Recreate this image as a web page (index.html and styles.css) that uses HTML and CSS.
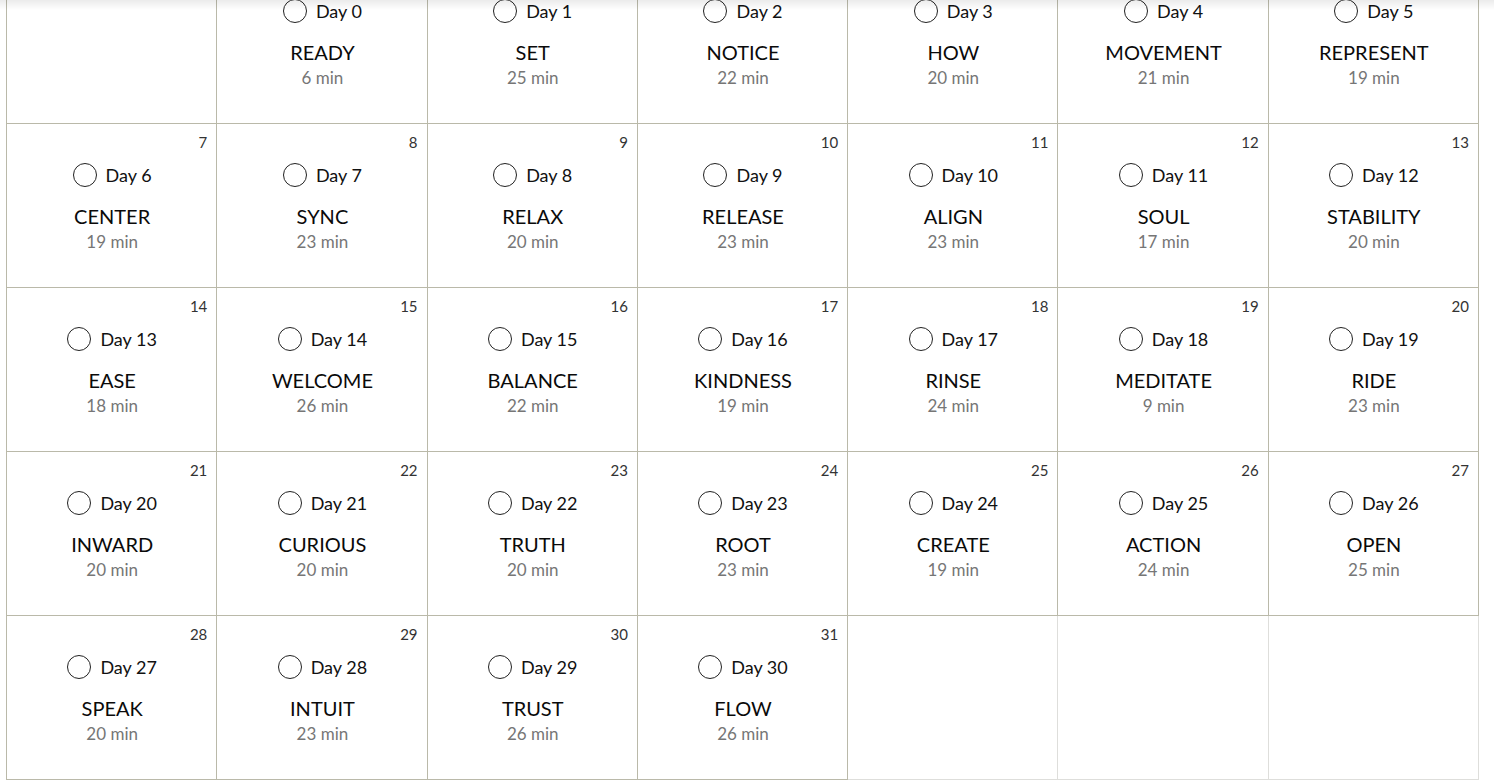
FILE: index.html
```html
<!DOCTYPE html>
<html lang="en">
<head>
<meta charset="utf-8">
<title>Calendar</title>
<link rel="stylesheet" href="styles.css">
</head>
<body>
<div class="top-shadow"></div>
<main class="calendar">
  <div class="cell empty-lead"></div>
  <div class="cell"><div class="date"></div><div class="day"><span class="check"></span><span class="day-label">Day 0</span></div><div class="title">READY</div><div class="mins">6 min</div></div>
  <div class="cell"><div class="date"></div><div class="day"><span class="check"></span><span class="day-label">Day 1</span></div><div class="title">SET</div><div class="mins">25 min</div></div>
  <div class="cell"><div class="date"></div><div class="day"><span class="check"></span><span class="day-label">Day 2</span></div><div class="title">NOTICE</div><div class="mins">22 min</div></div>
  <div class="cell"><div class="date"></div><div class="day"><span class="check"></span><span class="day-label">Day 3</span></div><div class="title">HOW</div><div class="mins">20 min</div></div>
  <div class="cell"><div class="date"></div><div class="day"><span class="check"></span><span class="day-label">Day 4</span></div><div class="title">MOVEMENT</div><div class="mins">21 min</div></div>
  <div class="cell"><div class="date"></div><div class="day"><span class="check"></span><span class="day-label">Day 5</span></div><div class="title">REPRESENT</div><div class="mins">19 min</div></div>

  <div class="cell"><div class="date">7</div><div class="day"><span class="check"></span><span class="day-label">Day 6</span></div><div class="title">CENTER</div><div class="mins">19 min</div></div>
  <div class="cell"><div class="date">8</div><div class="day"><span class="check"></span><span class="day-label">Day 7</span></div><div class="title">SYNC</div><div class="mins">23 min</div></div>
  <div class="cell"><div class="date">9</div><div class="day"><span class="check"></span><span class="day-label">Day 8</span></div><div class="title">RELAX</div><div class="mins">20 min</div></div>
  <div class="cell"><div class="date">10</div><div class="day"><span class="check"></span><span class="day-label">Day 9</span></div><div class="title">RELEASE</div><div class="mins">23 min</div></div>
  <div class="cell"><div class="date">11</div><div class="day"><span class="check"></span><span class="day-label">Day 10</span></div><div class="title">ALIGN</div><div class="mins">23 min</div></div>
  <div class="cell"><div class="date">12</div><div class="day"><span class="check"></span><span class="day-label">Day 11</span></div><div class="title">SOUL</div><div class="mins">17 min</div></div>
  <div class="cell"><div class="date">13</div><div class="day"><span class="check"></span><span class="day-label">Day 12</span></div><div class="title">STABILITY</div><div class="mins">20 min</div></div>

  <div class="cell"><div class="date">14</div><div class="day"><span class="check"></span><span class="day-label">Day 13</span></div><div class="title">EASE</div><div class="mins">18 min</div></div>
  <div class="cell"><div class="date">15</div><div class="day"><span class="check"></span><span class="day-label">Day 14</span></div><div class="title">WELCOME</div><div class="mins">26 min</div></div>
  <div class="cell"><div class="date">16</div><div class="day"><span class="check"></span><span class="day-label">Day 15</span></div><div class="title">BALANCE</div><div class="mins">22 min</div></div>
  <div class="cell"><div class="date">17</div><div class="day"><span class="check"></span><span class="day-label">Day 16</span></div><div class="title">KINDNESS</div><div class="mins">19 min</div></div>
  <div class="cell"><div class="date">18</div><div class="day"><span class="check"></span><span class="day-label">Day 17</span></div><div class="title">RINSE</div><div class="mins">24 min</div></div>
  <div class="cell"><div class="date">19</div><div class="day"><span class="check"></span><span class="day-label">Day 18</span></div><div class="title">MEDITATE</div><div class="mins">9 min</div></div>
  <div class="cell"><div class="date">20</div><div class="day"><span class="check"></span><span class="day-label">Day 19</span></div><div class="title">RIDE</div><div class="mins">23 min</div></div>

  <div class="cell"><div class="date">21</div><div class="day"><span class="check"></span><span class="day-label">Day 20</span></div><div class="title">INWARD</div><div class="mins">20 min</div></div>
  <div class="cell"><div class="date">22</div><div class="day"><span class="check"></span><span class="day-label">Day 21</span></div><div class="title">CURIOUS</div><div class="mins">20 min</div></div>
  <div class="cell"><div class="date">23</div><div class="day"><span class="check"></span><span class="day-label">Day 22</span></div><div class="title">TRUTH</div><div class="mins">20 min</div></div>
  <div class="cell"><div class="date">24</div><div class="day"><span class="check"></span><span class="day-label">Day 23</span></div><div class="title">ROOT</div><div class="mins">23 min</div></div>
  <div class="cell"><div class="date">25</div><div class="day"><span class="check"></span><span class="day-label">Day 24</span></div><div class="title">CREATE</div><div class="mins">19 min</div></div>
  <div class="cell"><div class="date">26</div><div class="day"><span class="check"></span><span class="day-label">Day 25</span></div><div class="title">ACTION</div><div class="mins">24 min</div></div>
  <div class="cell"><div class="date">27</div><div class="day"><span class="check"></span><span class="day-label">Day 26</span></div><div class="title">OPEN</div><div class="mins">25 min</div></div>

  <div class="cell"><div class="date">28</div><div class="day"><span class="check"></span><span class="day-label">Day 27</span></div><div class="title">SPEAK</div><div class="mins">20 min</div></div>
  <div class="cell"><div class="date">29</div><div class="day"><span class="check"></span><span class="day-label">Day 28</span></div><div class="title">INTUIT</div><div class="mins">23 min</div></div>
  <div class="cell"><div class="date">30</div><div class="day"><span class="check"></span><span class="day-label">Day 29</span></div><div class="title">TRUST</div><div class="mins">26 min</div></div>
  <div class="cell"><div class="date">31</div><div class="day"><span class="check"></span><span class="day-label">Day 30</span></div><div class="title">FLOW</div><div class="mins">26 min</div></div>
  <div class="cell empty-trail"></div>
  <div class="cell empty-trail"></div>
  <div class="cell empty-trail"></div>
</main>
</body>
</html>
```

FILE: styles.css
```css
html, body {
  margin: 0;
  padding: 0;
  background: #ffffff;
  overflow: hidden;
}

body {
  font-family: "Lato", "Open Sans", sans-serif;
  color: #111111;
}

.top-shadow {
  position: fixed;
  top: 0;
  left: 0;
  right: 0;
  height: 10px;
  background: linear-gradient(to bottom, rgba(0, 0, 0, 0.08), rgba(0, 0, 0, 0));
  pointer-events: none;
  z-index: 5;
}

.calendar {
  display: grid;
  grid-template-columns: repeat(7, 1fr);
  grid-auto-rows: 164px;
  width: 1473px;
  margin: -41px 0 0 6px;
  border-left: 1px solid #bab9a9;
  border-top: 1px solid #bab9a9;
  box-sizing: border-box;
}

.cell {
  border-right: 1px solid #bab9a9;
  border-bottom: 1px solid #bab9a9;
  padding: 8px 9px 0 10px;
  display: flex;
  flex-direction: column;
  align-items: center;
  min-width: 0;
}

.cell.empty-trail {
  border-right-color: #dededb;
  border-bottom-color: #dededb;
}

.date {
  align-self: stretch;
  text-align: right;
  font-size: 15px;
  line-height: 20px;
  height: 20px;
  color: #333333;
}

.day {
  display: flex;
  align-items: center;
  gap: 9px;
  margin-top: 11px;
  height: 24px;
}

.check {
  width: 24px;
  height: 24px;
  box-sizing: border-box;
  border: 1.5px solid #222222;
  border-radius: 50%;
  flex: none;
}

.day-label {
  font-size: 18px;
  line-height: 24px;
  color: #111111;
}

.title {
  margin-top: 17px;
  font-size: 20px;
  line-height: 24px;
  color: #0a0a0a;
}

.mins {
  margin-top: 3px;
  font-size: 17px;
  line-height: 22px;
  color: #767676;
}
```
